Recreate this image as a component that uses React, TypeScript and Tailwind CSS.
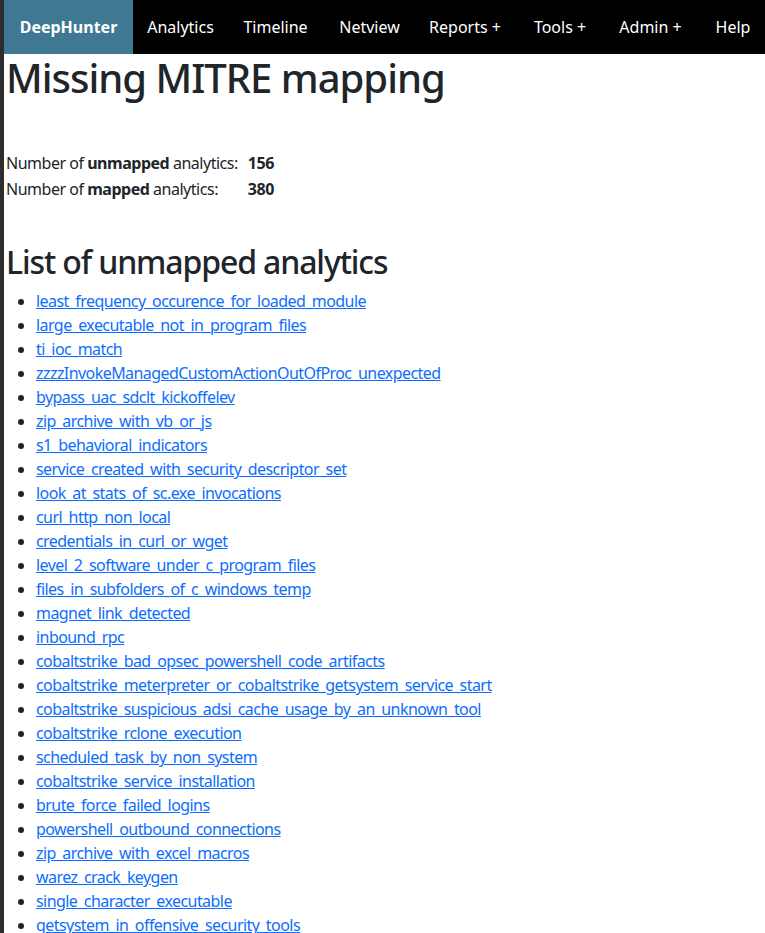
import React from 'react';

const navItems = ['Analytics', 'Timeline', 'Netview', 'Reports +', 'Tools +', 'Admin +', 'Help'];
const navWidths = ['w-[95px]', 'w-[95px]', 'w-[93px]', 'w-[98px]', 'w-[92px]', 'w-[89px]', 'w-[76px]'];

const unmapped = [
  'least_frequency_occurence_for_loaded_module',
  'large_executable_not_in_program_files',
  'ti_ioc_match',
  'zzzzInvokeManagedCustomActionOutOfProc_unexpected',
  'bypass_uac_sdclt_kickoffelev',
  'zip_archive_with_vb_or_js',
  's1_behavioral_indicators',
  'service_created_with_security_descriptor_set',
  'look_at_stats_of_sc.exe_invocations',
  'curl_http_non_local',
  'credentials_in_curl_or_wget',
  'level_2_software_under_c_program_files',
  'files_in_subfolders_of_c_windows_temp',
  'magnet_link_detected',
  'inbound_rpc',
  'cobaltstrike_bad_opsec_powershell_code_artifacts',
  'cobaltstrike_meterpreter_or_cobaltstrike_getsystem_service_start',
  'cobaltstrike_suspicious_adsi_cache_usage_by_an_unknown_tool',
  'cobaltstrike_rclone_execution',
  'scheduled_task_by_non_system',
  'cobaltstrike_service_installation',
  'brute_force_failed_logins',
  'powershell_outbound_connections',
  'zip_archive_with_excel_macros',
  'warez_crack_keygen',
  'single_character_executable',
  'getsystem_in_offensive_security_tools',
];

export default function App() {
  return (
    <div className="min-h-screen bg-white border-l-4 border-[#2d2d2d] font-['Noto_Sans','Open_Sans',sans-serif] text-[#212529] text-base">
      {/* Navbar */}
      <nav className="h-[54px] bg-black flex items-stretch overflow-hidden whitespace-nowrap">
        <div className="w-[129px] shrink-0 bg-[#3e7893] text-white font-bold flex items-center justify-center">
          DeepHunter
        </div>
        {navItems.map((item, i) => (
          <div key={item} className={`${navWidths[i]} shrink-0 text-white flex items-center justify-center`}>
            {item}
          </div>
        ))}
      </nav>

      <div className="pl-[2px]">
        <h1 className="text-[40px] leading-[1.2] font-medium mb-2 tracking-[-0.025em]">Missing MITRE mapping</h1>

        {/* Counters */}
        <table className="mt-[48px] border-collapse tracking-[-0.03em]">
          <tbody>
            <tr className="h-[26px]">
              <td className="pr-[10px]">Number of <b>unmapped</b> analytics:</td>
              <td className="font-bold">156</td>
            </tr>
            <tr className="h-[26px]">
              <td className="pr-[10px]">Number of <b>mapped</b> analytics:</td>
              <td className="font-bold">380</td>
            </tr>
          </tbody>
        </table>

        <h2 className="mt-[41px] text-[32px] leading-[1.2] font-medium mb-2 tracking-[-0.035em]">List of unmapped analytics</h2>

        <ul className="list-disc pl-[30px] tracking-[-0.035em]">
          {unmapped.map((name) => (
            <li key={name} className="leading-6">
              <a href="#" className="text-[#0d6efd] underline">{name}</a>
            </li>
          ))}
        </ul>
      </div>
    </div>
  );
}
